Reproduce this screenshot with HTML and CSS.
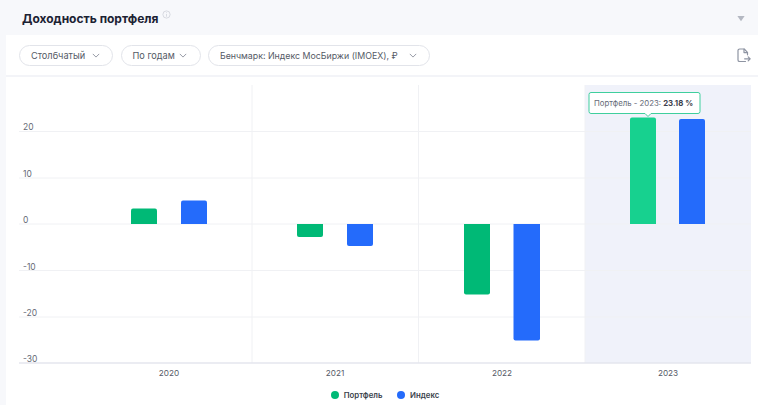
FILE: index.html
```html
<!DOCTYPE html>
<html lang="ru">
<head>
<meta charset="utf-8">
<title>Доходность портфеля</title>
<link rel="stylesheet" href="styles.css">
</head>
<body>
<header class="head">
  <h1 class="title">Доходность портфеля</h1>
  <svg class="info" viewBox="0 0 10 10" aria-hidden="true"><circle cx="5" cy="5" r="4" /><path d="M5 4.4v3M5 2.6v.8" /></svg>
  <svg class="collapse" viewBox="0 0 10 8" aria-hidden="true"><path d="M0.5 1h9L5 7.5z" /></svg>
</header>
<main class="panel">
  <div class="toolbar">
    <button class="pill pill-type">Столбчатый <svg class="chev" viewBox="0 0 10 6"><path d="M1 1l4 4 4-4" /></svg></button>
    <button class="pill pill-period">По годам <svg class="chev" viewBox="0 0 10 6"><path d="M1 1l4 4 4-4" /></svg></button>
    <button class="pill pill-bench">Бенчмарк: Индекс МосБиржи (IMOEX), ₽ <svg class="chev" viewBox="0 0 10 6"><path d="M1 1l4 4 4-4" /></svg></button>
    <svg class="export" viewBox="0 0 14 15" aria-hidden="true">
      <path d="M8.5 13.5H2.6A1.6 1.6 0 0 1 1 11.9V2.6A1.6 1.6 0 0 1 2.6 1h4.6l3.3 3.4v2.4" />
      <path d="M7 1v3.6h3.5" />
      <path d="M7.6 10.8h5.6M11.2 8.8l2 2-2 2" />
    </svg>
  </div>
  <svg class="chart" viewBox="0 0 752 305" width="752" height="305">
    <rect class="band" x="579" y="8" width="166" height="278" />
    <g class="grid">
      <path d="M13 54.500H745M13 101H745M13 147H745M13 193.500H745M13 240H745" />
      <path d="M246 8V286M412.500 8V286M579 8V286" />
    </g>
    <path class="axis" d="M13 286H745" />
    <g class="ylabels">
      <text x="17" y="52.500">20</text>
      <text x="17" y="99.500">10</text>
      <text x="17" y="145.500">0</text>
      <text x="17" y="192.500">-10</text>
      <text x="17" y="238.500">-20</text>
      <text x="17" y="284.500">-30</text>
    </g>
    <g class="green">
      <path d="M125 147v-13.500a2 2 0 0 1 2-2h22a2 2 0 0 1 2 2V147z" />
      <path d="M291 147v11a2 2 0 0 0 2 2h22a2 2 0 0 0 2-2v-11z" />
      <path d="M458 147v68.500a2 2 0 0 0 2 2h22a2 2 0 0 0 2-2V147z" />
    </g>
    <path class="green-hi" d="M624 147V42.500a2 2 0 0 1 2-2h22a2 2 0 0 1 2 2V147z" />
    <g class="blue">
      <path d="M175 147v-21.500a2 2 0 0 1 2-2h22a2 2 0 0 1 2 2V147z" />
      <path d="M341 147v20a2 2 0 0 0 2 2h22a2 2 0 0 0 2-2v-20z" />
      <path d="M507.500 147v114.500a2 2 0 0 0 2 2h22.500a2 2 0 0 0 2-2V147z" />
      <path d="M673 147V44a2 2 0 0 1 2-2h22a2 2 0 0 1 2 2v103z" />
    </g>
    <g class="xlabels">
      <text x="163" y="299">2020</text>
      <text x="329" y="299">2021</text>
      <text x="496" y="299">2022</text>
      <text x="662" y="299">2023</text>
    </g>
    <g class="tooltip">
      <path class="tip-box" d="M585 15.500h107a2 2 0 0 1 2 2v17a2 2 0 0 1-2 2h-47l-3 3-3-3h-54a2 2 0 0 1-2-2v-17a2 2 0 0 1 2-2z" />
      <text class="tip-text" x="588" y="29">Портфель - 2023: <tspan class="tip-val">23.18 %</tspan></text>
    </g>
  </svg>
  <div class="legend">
    <span class="item"><i class="dot dot-green"></i>Портфель</span>
    <span class="item"><i class="dot dot-blue"></i>Индекс</span>
  </div>
</main>
</body>
</html>
```
FILE: styles.css
```css
* { box-sizing: border-box; }
html, body { margin: 0; padding: 0; }
body {
  width: 758px;
  height: 405px;
  overflow: hidden;
  background: #f7f8fb;
  font-family: Inter, "Liberation Sans", sans-serif;
}
.head {
  height: 35px;
  display: flex;
  align-items: flex-start;
  padding-left: 22px;
}
.title {
  margin: 10px 0 0;
  font-size: 12px;
  line-height: 17px;
  font-weight: 700;
  color: #1c2233;
}
.info {
  width: 9px;
  height: 9px;
  margin: 10px 0 0 3px;
  fill: none;
  stroke: #c6c9d2;
  stroke-width: 0.7;
}
.collapse {
  width: 8px;
  height: 7px;
  margin: 15px 13px 0 auto;
  fill: #b4b8c2;
}
.panel {
  margin-left: 6px;
  height: 370px;
  background: #fff;
}
.toolbar {
  height: 42px;
  display: flex;
  align-items: center;
  gap: 7.5px;
  padding: 0 7px 0 13px;
  border-bottom: 2px solid #f3f4f8;
}
.pill {
  height: 21px;
  display: flex;
  align-items: center;
  justify-content: space-between;
  padding: 0 12.500px 0 11px;
  background: #fff;
  border: 1px solid #e2e4ea;
  border-radius: 11px;
  font: 400 9.2px Inter, "Liberation Sans", sans-serif;
  color: #555a66;
  white-space: nowrap;
}
.pill-type { width: 94px; }
.pill-period { width: 80px; }
.pill-bench { width: 222px; font-size: 8.800px; }
.chev {
  width: 8px;
  height: 5px;
  fill: none;
  stroke: #9297a3;
  stroke-width: 1.2;
}
.export {
  width: 14px;
  height: 15px;
  margin-left: auto;
  fill: none;
  stroke: #8e94a2;
  stroke-width: 1.2;
  stroke-linecap: round;
  stroke-linejoin: round;
}
.chart { display: block; font-family: Inter, "Liberation Sans", sans-serif; }
.band { fill: #f0f2fa; }
.grid { fill: none; stroke: #f0f1f4; stroke-width: 1; }
.axis { fill: none; stroke: #e5e6ee; stroke-width: 1.5; }
.ylabels text { font-size: 8.500px; fill: #666b77; }
.xlabels text { font-size: 8.200px; fill: #555a66; text-anchor: middle; }
.green { fill: #00b976; }
.green-hi { fill: #17d18f; }
.blue { fill: #246bfb; }
.tip-box { fill: #fff; stroke: #3fcf9d; stroke-width: 1; }
.tip-text { font-size: 7.8px; fill: #666b77; }
.tip-val { font-weight: 700; fill: #3c404b; }
.legend {
  display: flex;
  justify-content: center;
  gap: 14.500px;
  margin-top: 8px;
  padding-left: 6px;
  font-size: 7.8px;
  line-height: 10px;
  font-weight: 600;
  color: #3a3f4b;
}
.item { display: flex; align-items: center; gap: 5px; }
.dot { width: 8px; height: 8px; border-radius: 50%; display: block; }
.dot-green { background: #00b976; }
.dot-blue { background: #246bfb; }
```
